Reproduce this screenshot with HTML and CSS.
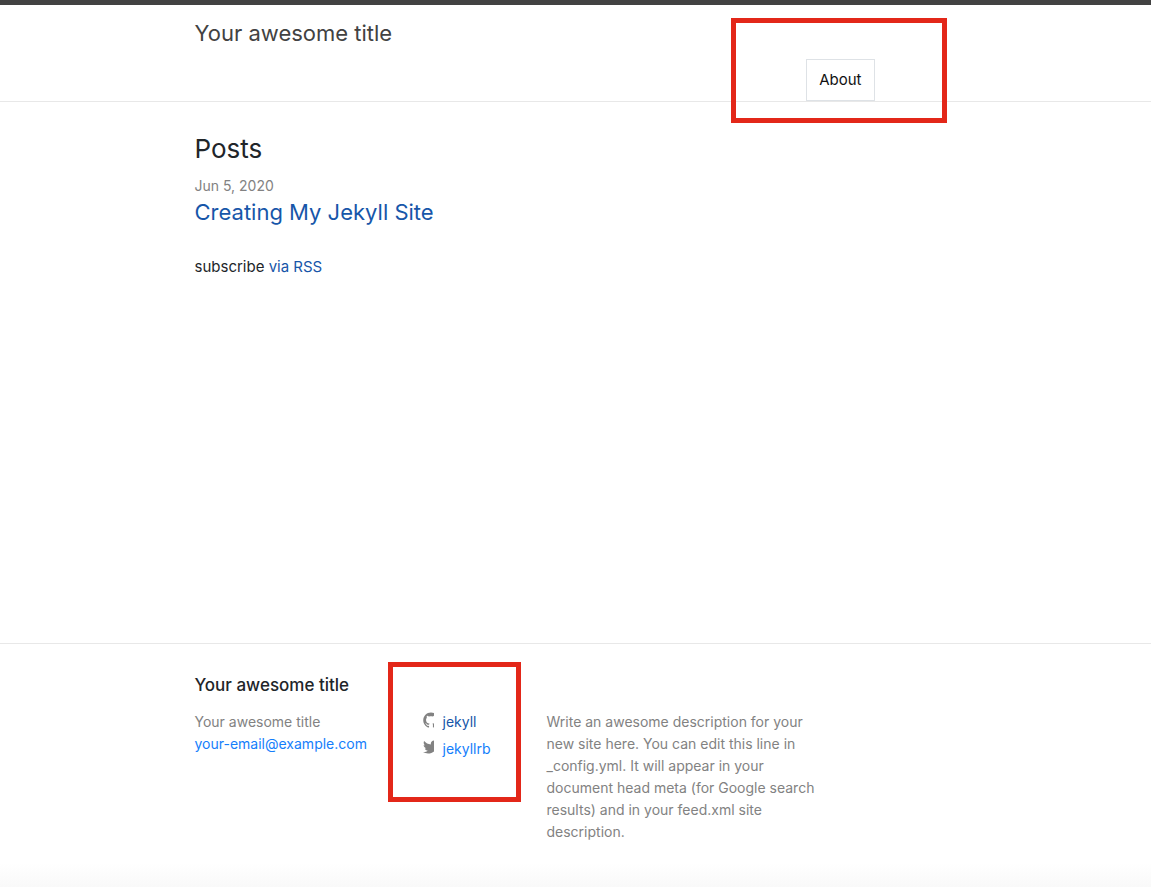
FILE: index.html
```html
<!DOCTYPE html>
<html lang="en">
<head>
<meta charset="utf-8">
<meta name="viewport" content="width=device-width, initial-scale=1">
<title>Your awesome title</title>
<link rel="stylesheet" href="styles.css">
</head>
<body class="page">
<header class="site-header">
  <div class="wrapper header-row">
    <a class="site-title" href="#">Your awesome title</a>
    <nav class="site-nav"><a class="nav-link" href="#">About</a><span class="highlight highlight-nav"></span></nav>
  </div>
</header>
<main class="site-main">
  <div class="wrapper">
    <h1 class="list-heading">Posts</h1>
    <ul class="post-list">
      <li><time class="post-meta" datetime="2020-06-05">Jun 5, 2020</time>
        <h2 class="post-title"><a class="link" href="#">Creating My Jekyll Site</a></h2></li>
    </ul>
    <p class="subscribe">subscribe <a class="link" href="#">via RSS</a></p>
  </div>
</main>
<footer class="site-footer">
  <div class="wrapper">
    <h2 class="footer-heading">Your awesome title</h2>
    <div class="footer-columns">
      <ul class="contact">
        <li>Your awesome title</li>
        <li><a class="link-bright" href="#">your-email@example.com</a></li>
      </ul>
      <div class="social">
        <ul class="social-list">
          <li><a class="social-link link" href="#"><svg class="icon" viewBox="0 0 11 16" aria-hidden="true"><path d="M7.999,0.431c-4.285,0-7.76,3.474-7.76,7.761c0,3.428,2.223,6.337,5.307,7.363c0.388,0.071,0.53-0.168,0.53-0.374c0-0.184-0.007-0.672-0.01-1.32c-2.159,0.469-2.614-1.04-2.614-1.04c-0.353-0.896-0.862-1.135-0.862-1.135c-0.705-0.481,0.053-0.472,0.053-0.472c0.779,0.055,1.189,0.8,1.189,0.8c0.692,1.186,1.816,0.843,2.258,0.645c0.071-0.502,0.271-0.843,0.493-1.037C4.86,11.425,3.049,10.76,3.049,7.786c0-0.847,0.302-1.54,0.799-2.082C3.768,5.507,3.501,4.718,3.924,3.65c0,0,0.652-0.209,2.134,0.796C6.677,4.273,7.34,4.187,8,4.184c0.659,0.003,1.323,0.089,1.943,0.261c1.482-1.004,2.132-0.796,2.132-0.796c0.423,1.068,0.157,1.857,0.077,2.054c0.497,0.542,0.798,1.235,0.798,2.082c0,2.981-1.814,3.637-3.543,3.829c0.279,0.24,0.527,0.713,0.527,1.437c0,1.037-0.01,1.874-0.01,2.129c0,0.208,0.14,0.449,0.534,0.373c3.081-1.028,5.302-3.935,5.302-7.362C15.76,3.906,12.285,0.431,7.999,0.431z"/></svg>jekyll</a></li>
          <li><a class="social-link link-bright" href="#"><svg class="icon" viewBox="0 0 11 16" aria-hidden="true"><path d="M15.969,3.058c-0.586,0.26-1.217,0.436-1.878,0.515c0.675-0.405,1.194-1.045,1.438-1.809c-0.632,0.375-1.332,0.647-2.076,0.793c-0.596-0.636-1.446-1.033-2.387-1.033c-1.806,0-3.27,1.464-3.27,3.27c0,0.256,0.029,0.506,0.085,0.745C5.163,5.404,2.753,4.102,1.14,2.124C0.859,2.607,0.698,3.168,0.698,3.767c0,1.134,0.577,2.135,1.455,2.722C1.616,6.472,1.112,6.325,0.671,6.08c0,0.014,0,0.027,0,0.041c0,1.584,1.127,2.906,2.623,3.206C3.02,9.402,2.731,9.442,2.433,9.442c-0.211,0-0.416-0.021-0.615-0.059c0.416,1.299,1.624,2.245,3.055,2.271c-1.119,0.877-2.529,1.4-4.061,1.4c-0.264,0-0.524-0.015-0.78-0.046c1.447,0.928,3.166,1.469,5.013,1.469c6.015,0,9.304-4.983,9.304-9.304c0-0.142-0.003-0.283-0.009-0.423C14.976,4.29,15.531,3.714,15.969,3.058z"/></svg>jekyllrb</a></li>
        </ul>
        <span class="highlight highlight-social"></span>
      </div>
      <p class="description">Write an awesome description for your new site here. You can edit this line in _config.yml. It will appear in your document head meta (for Google search results) and in your feed.xml site description.</p>
    </div>
  </div>
</footer>
</body>
</html>
```
FILE: styles.css
```css
*, *::before, *::after { box-sizing: border-box; }
.page {
  margin: 0;
  min-height: 100vh;
  display: flex;
  flex-direction: column;
  background: #fff;
  color: #212529;
  font: 16px/24px Inter, "Liberation Sans", sans-serif;
}
.page a { text-decoration: none; }
.page ul { list-style: none; margin: 0; padding: 0; }
.wrapper { width: 100%; max-width: 822px; margin: 0 auto; padding: 0 30px; }

.site-header { border-top: 5px solid #424242; border-bottom: 1px solid #e8e8e8; }
.header-row { display: flex; justify-content: space-between; min-height: 96px; }
.site-title { color: #424242; font-size: 22px; line-height: 56px; }
.site-nav { position: relative; align-self: flex-end; margin-right: 82px; }
.nav-link {
  display: block;
  padding: 8px 12px;
  border: 1px solid #dee2e6;
  color: #111;
  font-size: 15px;
}
.highlight { position: absolute; border: 5px solid #e32719; pointer-events: none; }
.highlight-nav { top: -41px; right: -72px; bottom: -22px; left: -75px; }

.site-main { flex: 1; padding: 30px 0; }
.list-heading { margin: 0 0 10px; font-size: 26px; line-height: 34px; font-weight: 400; }
.post-meta { display: block; color: #828282; font-size: 14px; line-height: 20px; }
.post-title { margin: 0 0 27px; font-size: 22px; line-height: 32px; font-weight: 400; }
.subscribe { margin: 0; font-size: 15px; }
.link { color: #1756a9; }
.link-bright { color: #147efb; }

.site-footer {
  padding: 30px 0 44px;
  border-top: 1px solid #e8e8e8;
  background: linear-gradient(to top, #f9f9f9, #fff 24px);
  color: #828282;
  font-size: 14px;
  line-height: 22px;
}
.footer-heading { margin: 0 0 15px; color: #212529; font-size: 17px; line-height: 22px; font-weight: 500; }
.footer-columns { display: grid; grid-template-columns: 228fr 124fr 284fr 126fr; }
.social { position: relative; justify-self: start; align-self: start; }
.social-list { display: grid; gap: 5px; }
.social-link { display: flex; gap: 9px; }
.icon { flex: none; width: 11px; height: 16px; margin-top: 1px; fill: #828282; overflow: hidden; }
.highlight-social { top: -49px; right: -30px; bottom: -42px; left: -35px; }
.description { margin: 0; }
```
